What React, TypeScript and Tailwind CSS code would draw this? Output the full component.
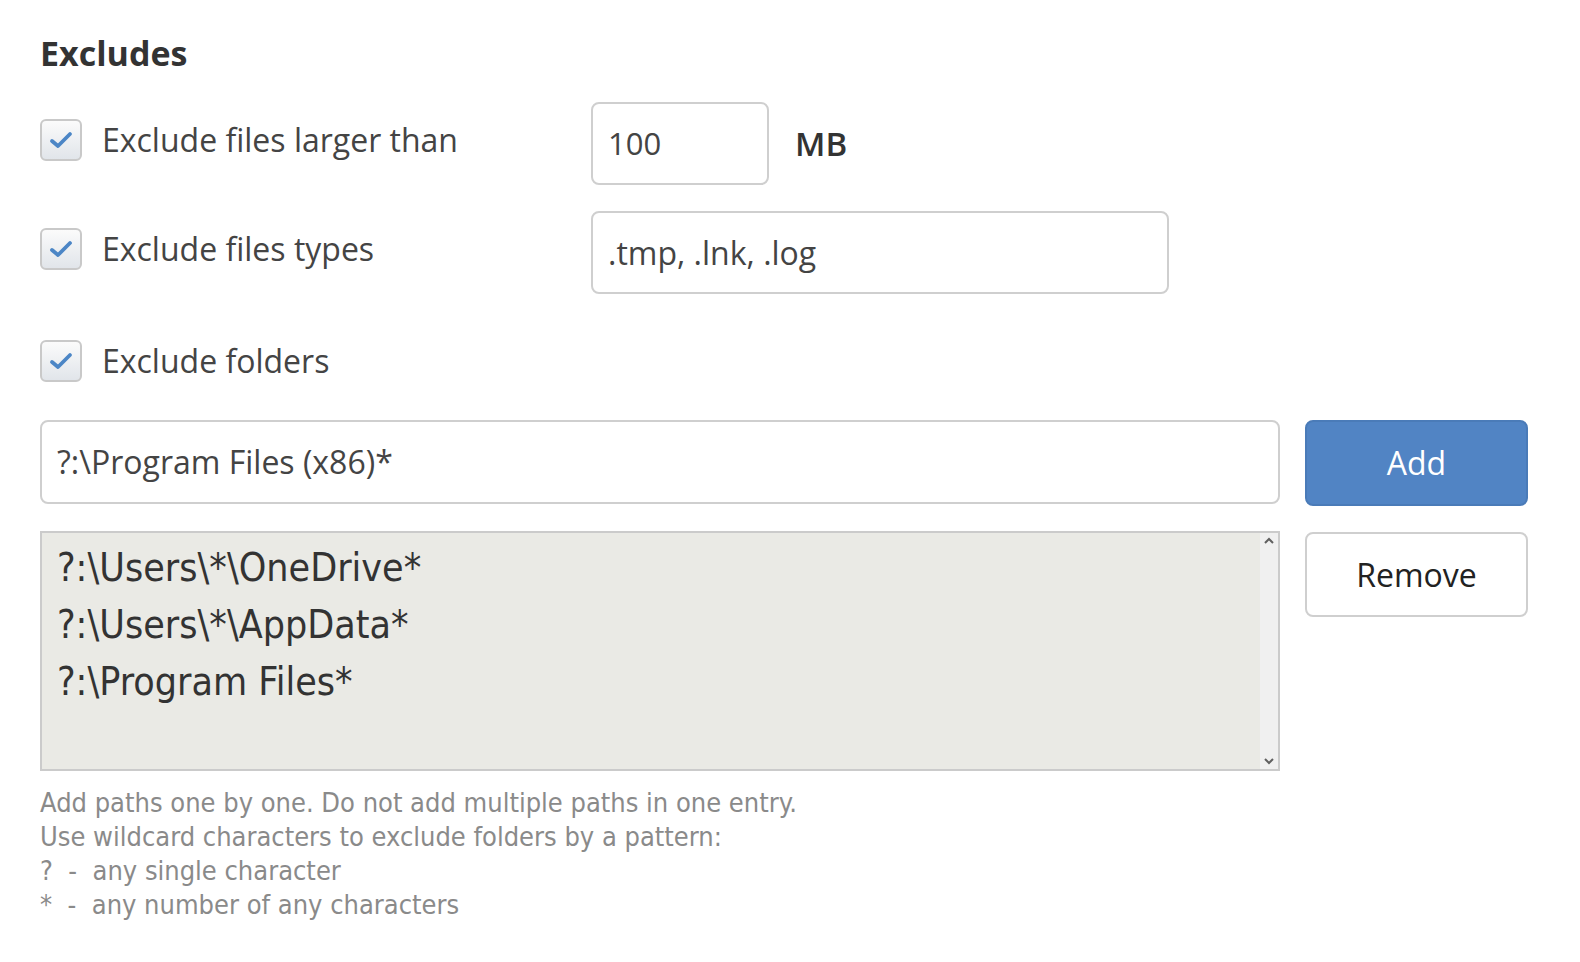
import React from "react";

function Check() {
  return (
    <div className="w-[42px] h-[42px] shrink-0 rounded-[6px] border-2 border-[#c9c9c9] bg-gradient-to-b from-[#fbfbfb] to-[#e1e5ea] flex items-center justify-center">
      <svg width="26" height="22" viewBox="0 0 26 22">
        <path d="M4 12 L10 17 L22 5" fill="none" stroke="#4c86c6" strokeWidth="3.8" strokeLinecap="round" strokeLinejoin="round" />
      </svg>
    </div>
  );
}

export default function App() {
  const sans = { fontFamily: '"Open Sans", sans-serif' } as React.CSSProperties;
  const tah = { fontFamily: '"DejaVu Sans Condensed", "DejaVu Sans", sans-serif' } as React.CSSProperties;
  return (
    <div className="w-full h-[962px] overflow-hidden bg-white text-[#444] pl-[40px] pt-[30px]" style={sans}>
      <h2 className="text-[34px] font-bold text-[#333] leading-[46px]">Excludes</h2>

      <div className="flex items-center mt-[26px] h-[83px]">
        <div className="flex items-center gap-[20px] w-[551px] shrink-0 -mt-[8px]">
          <Check />
          <span className="text-[32px] text-[#444]">Exclude files larger than</span>
        </div>
        <div className="w-[178px] h-[83px] shrink-0 border-2 border-[#cfcfcf] rounded-[8px] flex items-center px-[15px] text-[31px] text-[#444]">100</div>
        <span className="ml-[26px] text-[33px] font-semibold text-[#333]">MB</span>
      </div>

      <div className="flex items-center mt-[26px] h-[83px]">
        <div className="flex items-center gap-[20px] w-[551px] shrink-0 -mt-[8px]">
          <Check />
          <span className="text-[32px] text-[#444]">Exclude files types</span>
        </div>
        <div className="w-[578px] h-[83px] shrink-0 border-2 border-[#cfcfcf] rounded-[8px] flex items-center px-[15px] text-[32px] text-[#444]">.tmp, .lnk, .log</div>
      </div>

      <div className="flex items-center gap-[20px] mt-[43px]">
        <Check />
        <span className="text-[32px] text-[#444]">Exclude folders</span>
      </div>

      <div className="flex gap-[25px] mt-[35px] w-[1488px]">
        <div className="flex-1 flex flex-col gap-[27px]">
          <div className="h-[84px] border-2 border-[#cfcfcf] rounded-[8px] flex items-center px-[15px] text-[32px] text-[#444]">?:\Program Files (x86)*</div>
          <div className="h-[240px] border-2 border-[#cbcbcb] bg-[#eaeae5] flex">
            <div className="flex-1 pl-[15px] pt-[6px] text-[39px] text-[#333] leading-[57px]" style={tah}>
              <div>?:\Users\*\OneDrive*</div>
              <div>?:\Users\*\AppData*</div>
              <div>?:\Program Files*</div>
            </div>
            <div className="w-[18px] bg-[#f0f0f0] flex flex-col justify-between items-center py-[4px]">
              <svg width="10" height="8" viewBox="0 0 10 8"><path d="M1 6 L5 2 L9 6" fill="none" stroke="#606060" strokeWidth="2" /></svg>
              <svg width="10" height="8" viewBox="0 0 10 8"><path d="M1 2 L5 6 L9 2" fill="none" stroke="#606060" strokeWidth="2" /></svg>
            </div>
          </div>
        </div>
        <div className="w-[223px] flex flex-col gap-[26px]">
          <button className="h-[86px] rounded-[8px] bg-[#5184c4] border-2 border-[#4a7bb8] text-white text-[32px]">Add</button>
          <button className="h-[85px] rounded-[8px] bg-white border-2 border-[#cfcfcf] text-[#222] text-[32px]">Remove</button>
        </div>
      </div>

      <div className="mt-[15px] text-[27px] leading-[34px] text-[#8a8a8a]" style={tah}>
        <div>Add paths one by one. Do not add multiple paths in one entry.</div>
        <div>Use wildcard characters to exclude folders by a pattern:</div>
        <div className="whitespace-pre">?  -  any single character</div>
        <div className="whitespace-pre">*  -  any number of any characters</div>
      </div>
    </div>
  );
}
